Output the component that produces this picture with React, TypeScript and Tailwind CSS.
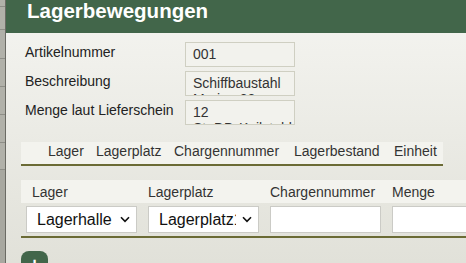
const formRows = [
  { label: "Artikelnummer", lines: ["001"] },
  { label: "Beschreibung", lines: ["Schiffbaustahl", "Marine 32"] },
  { label: "Menge laut Lieferschein", lines: ["12", "St. DD-Keilstahl"] },
];

const stockCols = [
  { name: "Lager", w: "w-[48px]" },
  { name: "Lagerplatz", w: "w-[78px]" },
  { name: "Chargennummer", w: "w-[120px]" },
  { name: "Lagerbestand", w: "w-[100px]" },
  { name: "Einheit", w: "w-[55px]" },
];

function Chevron() {
  return (
    <svg width="10" height="7" viewBox="0 0 10 7" className="shrink-0">
      <path d="M1 1.2 L5 5.4 L9 1.2" fill="none" stroke="#111" strokeWidth="1.6" />
    </svg>
  );
}

function FakeSelect({ value }: { value: string }) {
  return (
    <div className="flex h-[27px] w-[111px] items-center border border-[#cbcbc6] bg-white pl-[10px] pr-[6px]">
      <span className="mr-[6px] flex-1 overflow-hidden whitespace-nowrap text-[16px] leading-[20px] text-[#111]">
        {value}
      </span>
      <Chevron />
    </div>
  );
}

export default function App() {
  return (
    <div className="flex h-[263px] w-[466px] overflow-hidden font-['Liberation_Sans',Arial,sans-serif]">
      {/* strip of the window behind */}
      <div className="flex w-[5px] flex-col bg-[#b1b1a9]">
        <div className="h-[7px] border-b border-[#8e8e87]" />
        <div className="h-[23px] border-b border-[#8e8e87]" />
        <div className="h-[29px] border-b border-[#8e8e87]" />
        <div className="h-[28px] border-b border-[#8e8e87]" />
        <div className="h-[28px] border-b border-[#8e8e87]" />
        <div className="h-[28px] border-b border-[#8e8e87]" />
        <div className="h-[27px] border-b border-[#8e8e87]" />
        <div className="flex-1 bg-[#a8a8a0]" />
      </div>
      <div className="w-px bg-[#6b6b64]" />

      <div className="flex min-w-0 flex-1 flex-col bg-gradient-to-b from-[#f5f5f1] to-[#e1e1d9]">
        <div className="h-[33px] shrink-0 bg-[#42664a] pl-[21px]">
          <h1 className="text-[20.5px] font-bold leading-[21px] text-white">Lagerbewegungen</h1>
        </div>

        <div className="flex flex-col gap-[4px] pl-[19px] pt-[9px]">
          {formRows.map((r) => (
            <div key={r.label} className="flex">
              <div className="w-[160px] pt-[2px] text-[14px] leading-[16px] text-[#222]">{r.label}</div>
              <div className="h-[25px] w-[110px] overflow-hidden border border-[#cfcfc2] bg-[#f2f2ed] pl-[7px] pt-[3px] text-[14px] leading-[16px] text-[#333]">
                {r.lines.map((l) => (
                  <div key={l} className="whitespace-nowrap">{l}</div>
                ))}
              </div>
            </div>
          ))}
        </div>

        <div className="ml-[15px] mt-[17px] flex self-start border-b-2 border-[#6b6b35] bg-[#f3f3ee]">
          <div className="w-[21px]" />
          {stockCols.map((c) => (
            <div key={c.name} className={`${c.w} h-[22px] whitespace-nowrap pl-[6px] pt-[1px] text-[14px] leading-[17px] text-[#333]`}>
              {c.name}
            </div>
          ))}
        </div>

        <div className="ml-[15px] mt-[14px] w-[470px] border-b-2 border-[#6b6b35]">
          <div className="flex h-[23px] bg-[#f3f3ee] text-[14px] leading-[17px] text-[#333]">
            <div className="w-[122px] shrink-0 pl-[11px] pt-[4px]">Lager</div>
            <div className="w-[122px] shrink-0 pl-[5px] pt-[4px]">Lagerplatz</div>
            <div className="w-[122px] shrink-0 pl-[5px] pt-[4px]">Chargennummer</div>
            <div className="w-[122px] shrink-0 pl-[5px] pt-[4px]">Menge</div>
          </div>
          <div className="flex py-[3px]">
            <div className="w-[122px] shrink-0 pl-[5px]">
              <FakeSelect value="Lagerhalle" />
            </div>
            <div className="w-[122px] shrink-0 pl-[5px]">
              <FakeSelect value="Lagerplatz1" />
            </div>
            <div className="w-[122px] shrink-0 pl-[5px]">
              <div className="h-[27px] w-[111px] border border-[#cbcbc6] bg-white" />
            </div>
            <div className="w-[122px] shrink-0 pl-[5px]">
              <div className="h-[27px] w-[111px] border border-[#cbcbc6] bg-white" />
            </div>
          </div>
        </div>

        <div className="ml-[15px] mt-[13px] flex h-[27px] w-[27px] shrink-0 items-center justify-center rounded-lg bg-[#42664a] text-[20px] font-bold leading-none text-white">
          +
        </div>
      </div>
    </div>
  );
}
